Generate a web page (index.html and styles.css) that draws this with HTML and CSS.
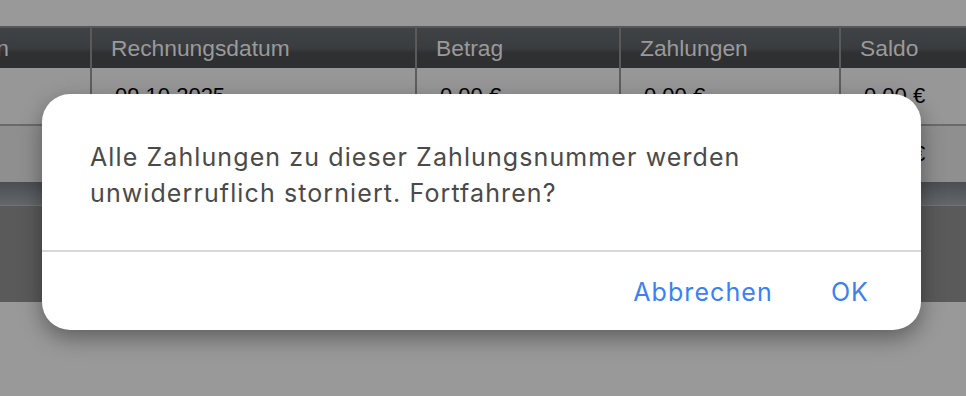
FILE: index.html
```html
<!DOCTYPE html>
<html lang="de">
<head>
<meta charset="utf-8">
<title>Zahlungen stornieren</title>
<link rel="stylesheet" href="styles.css">
</head>
<body>
<div class="page">
  <div class="table">
    <div class="row head">
      <div class="cell first">Position</div>
      <div class="cell">Rechnungsdatum</div>
      <div class="cell">Betrag</div>
      <div class="cell">Zahlungen</div>
      <div class="cell">Saldo</div>
    </div>
    <div class="row body r1">
      <div class="cell first">1</div>
      <div class="cell">09.10.2025</div>
      <div class="cell">0,00 €</div>
      <div class="cell">0,00 €</div>
      <div class="cell">0,00 €</div>
    </div>
    <div class="row body r2">
      <div class="cell first"></div>
      <div class="cell"></div>
      <div class="cell"></div>
      <div class="cell"></div>
      <div class="cell">0,00 €</div>
    </div>
    <div class="foot-strip"></div>
    <div class="foot-block"></div>
  </div>
</div>

<div class="dialog" role="alertdialog">
  <div class="message">Alle Zahlungen zu dieser Zahlungsnummer werden<br>unwiderruflich storniert. Fortfahren?</div>
  <div class="actions">
    <button class="btn">Abbrechen</button>
    <button class="btn">OK</button>
  </div>
</div>
</body>
</html>
```
FILE: styles.css
```css
html, body {
  margin: 0;
  padding: 0;
}
body {
  width: 966px;
  height: 396px;
  overflow: hidden;
  background: #999999;
  font-family: "Liberation Sans", Arial, sans-serif;
  position: relative;
}
.page {
  padding-top: 26px;
}
.table {
  border-top: 2px solid #555759;
}
.row {
  display: grid;
  grid-template-columns: 90px 325px 204px 220px 1fr;
}
.cell {
  display: flex;
  align-items: center;
  padding-left: 19px;
  white-space: nowrap;
  overflow: hidden;
  border-left: 2px solid #5e5e5e;
}
.cell.first {
  border-left: none;
  justify-content: flex-end;
  padding-left: 0;
  padding-right: 81px;
}
.head {
  height: 40px;
  background: linear-gradient(#404346 0%, #3a3d40 50%, #2f3032 62%, #2e2f31 100%);
  color: #9a9a9a;
  font-size: 22.8px;
}
.head .cell {
  border-left-color: #5a5a5a;
}
.head .cell.first {
  padding-right: 81px;
}
.body {
  background: #979797;
  color: #000;
  font-size: 22px;
}
.body .cell {
  padding-left: 23px;
}
.body .cell.first {
  padding-left: 0;
}
.r1 {
  height: 56px;
  border-bottom: 2px solid #6a6a6a;
}
.r1 .cell.first {
  color: transparent;
}
.r2 {
  height: 56px;
  background: #8f8f8f;
}
.foot-strip {
  height: 23px;
  background: linear-gradient(#4a4e52 0%, #575a5e 50%, #64676a 100%);
  border-bottom: 1px solid #737373;
}
.foot-block {
  height: 96px;
  background: #5a5a5a;
}

.dialog {
  position: absolute;
  left: 42px;
  top: 94px;
  width: 879px;
  height: 236px;
  background: #ffffff;
  border-radius: 28px;
  box-shadow: 0 8px 22px rgba(0, 0, 0, 0.38);
  display: flex;
  flex-direction: column;
  font-family: "Inter", "Noto Sans", sans-serif;
}
.message {
  height: 158px;
  box-sizing: border-box;
  padding: 45px 48px 0 48px;
  font-size: 25px;
  line-height: 36px;
  letter-spacing: 1.1px;
  color: #4a4a4a;
  border-bottom: 2px solid #d8d8d8;
}
.actions {
  flex: 1;
  display: flex;
  justify-content: flex-end;
  align-items: center;
  gap: 58px;
  padding: 2px 52px 0 0;
}
.btn {
  border: none;
  background: none;
  padding: 0;
  font-family: inherit;
  font-size: 25px;
  letter-spacing: 1.1px;
  color: #3b80f4;
  cursor: pointer;
}
```
